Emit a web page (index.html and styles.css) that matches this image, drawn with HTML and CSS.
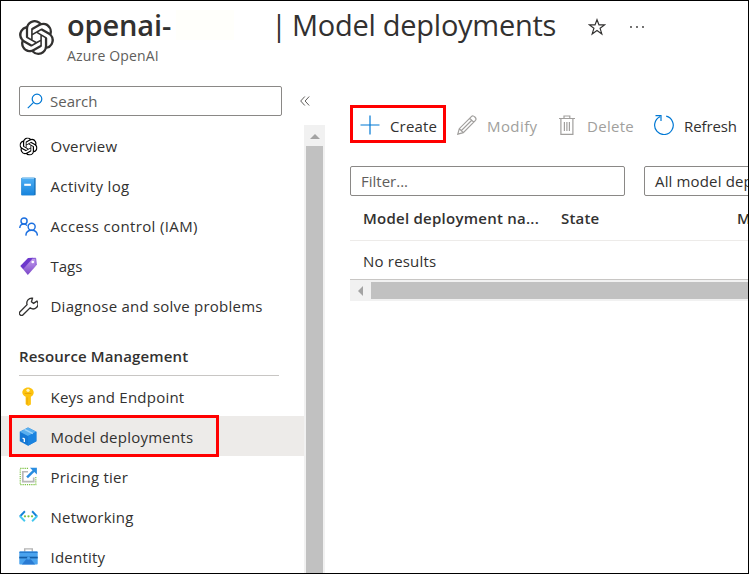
FILE: index.html
```
<!DOCTYPE html>
<html lang="en">
<head>
<meta charset="utf-8">
<title>openai | Model deployments</title>
<link rel="stylesheet" href="styles.css">
</head>
<body>
<svg class="defs" width="0" height="0">
  <symbol id="openai" viewBox="0 0 24 24"><path d="M22.2819 9.8211a5.9847 5.9847 0 0 0-.5157-4.9108 6.0462 6.0462 0 0 0-6.5098-2.9A6.0651 6.0651 0 0 0 4.9807 4.1818a5.9847 5.9847 0 0 0-3.9977 2.9 6.0462 6.0462 0 0 0 .7427 7.0966 5.98 5.98 0 0 0 .511 4.9107 6.051 6.051 0 0 0 6.5146 2.9001A5.9847 5.9847 0 0 0 13.2599 24a6.0557 6.0557 0 0 0 5.7718-4.2058 5.9894 5.9894 0 0 0 3.9977-2.9001 6.0557 6.0557 0 0 0-.7475-7.0729zm-9.022 12.6081a4.4755 4.4755 0 0 1-2.8764-1.0408l.1419-.0804 4.7783-2.7582a.7948.7948 0 0 0 .3927-.6813v-6.7369l2.02 1.1686a.071.071 0 0 1 .038.052v5.5826a4.504 4.504 0 0 1-4.4945 4.4944zm-9.6607-4.1254a4.4708 4.4708 0 0 1-.5346-3.0137l.142.0852 4.783 2.7582a.7712.7712 0 0 0 .7806 0l5.8428-3.3685v2.3324a.0804.0804 0 0 1-.0332.0615L9.74 19.9502a4.4992 4.4992 0 0 1-6.1408-1.6464zM2.3408 7.8956a4.485 4.485 0 0 1 2.3655-1.9728V11.6a.7664.7664 0 0 0 .3879.6765l5.8144 3.3543-2.0201 1.1685a.0757.0757 0 0 1-.071 0l-4.8303-2.7865A4.504 4.504 0 0 1 2.3408 7.872zm16.5963 3.8558L13.1038 8.364 15.1192 7.2a.0757.0757 0 0 1 .071 0l4.8303 2.7913a4.4944 4.4944 0 0 1-.6765 8.1042v-5.6772a.79.79 0 0 0-.407-.667zm2.0107-3.0231l-.142-.0852-4.7735-2.7818a.7759.7759 0 0 0-.7854 0L9.409 9.2297V6.8974a.0662.0662 0 0 1 .0284-.0615l4.8303-2.7866a4.4992 4.4992 0 0 1 6.6802 4.66zM8.3065 12.863l-2.02-1.1638a.0804.0804 0 0 1-.038-.0567V6.0742a4.4992 4.4992 0 0 1 7.3757-3.4537l-.142.0805L8.704 5.459a.7948.7948 0 0 0-.3927.6813zm1.0976-2.3654l2.602-1.4998 2.6069 1.4998v2.9994l-2.5974 1.4997-2.6067-1.4997Z"/></symbol>
  <linearGradient id="blue" x2="0" y2="1"><stop stop-color="#50b0f5"/><stop offset="1" stop-color="#1683dc"/></linearGradient>
  <linearGradient id="violet" x1="0" y1="0" x2="0" y2="1"><stop stop-color="#c4a0ee"/><stop offset="1" stop-color="#7a45c8"/></linearGradient>
</svg>
<div class="app">
  <header class="header">
    <svg class="logo"><use href="#openai"/></svg>
    <div class="heading">
      <h1 class="title"><b class="title-name">openai-</b><i class="title-mask"></i><span class="title-bar">|</span><span class="title-page">Model deployments</span>
        <svg class="star" viewBox="0 0 18 18"><path d="M9 1.700l2 5.200h5.600l-4.500 3.400 1.700 5.600L9 12.500l-4.800 3.400 1.700-5.600L1.400 6.900H7z"/></svg>
        <svg class="more" viewBox="0 0 16 4"><circle cx="2" cy="2" r=".9"/><circle cx="8" cy="2" r=".9"/><circle cx="14" cy="2" r=".9"/></svg>
      </h1>
      <p class="subtitle">Azure OpenAI</p>
    </div>
  </header>
  <div class="body">
    <aside class="side">
      <div class="search-row">
        <div class="field search"><svg class="glass" viewBox="0 0 16 16"><circle cx="10" cy="6" r="4.800"/><path d="M6.600 9.400L.8 15.200"/></svg><span>Search</span></div>
        <svg class="collapse" viewBox="0 0 10 10"><path d="M4.800.5L.7 5l4.100 4.500M9.200.5L5.100 5l4.100 4.500"/></svg>
      </div>
      <div class="menu">
        <nav class="nav">
          <a class="item"><svg class="ico" viewBox="0 0 20 20"><use href="#openai" x="0.500" y="0.500" width="19" height="19"/></svg><span>Overview</span></a>
          <a class="item wide"><svg class="ico" viewBox="0 0 20 20"><rect x="2.500" y=".7" width="15" height="18.600" rx="1" fill="#1670b8"/><rect x="2.500" y=".7" width="13.600" height="18.600" rx="1" fill="url(#blue)"/><path d="M3.500 1.300h12.500" stroke="#9ad0f5" stroke-width="1"/><path d="M5.500 8.200h7" stroke="#fff" stroke-width="2.200"/></svg><span>Activity log</span></a>
          <a class="item wide"><svg class="ico line-blue" viewBox="0 0 20 20"><circle cx="5.300" cy="4.200" r="3.200"/><path d="M.8 11.500C1 8.500 3 7.500 5 7.500c1.600 0 2.700.5 3.500 1.500"/><circle cx="13.300" cy="10.200" r="3.700"/><path d="M7.200 19.600c.2-3.700 2.600-5.600 6.100-5.600s5.900 1.900 6.100 5.600"/></svg><span>Access control (IAM)</span></a>
          <a class="item tight"><svg class="ico" viewBox="0 0 20 20"><path d="M2 10L9.800 1.400 17 1.200l1.200 7.800L9.300 19z" fill="url(#violet)"/><path d="M1.300 9.500L9.500 1l5.500-.2L4.500 12.500z" fill="#6d38cc"/><path d="M14 1.500l3.500-.2.700 7.200" fill="none" stroke="#7b4ad0"/><circle cx="14.500" cy="5.300" r="1.400" fill="#fff"/></svg><span>Tags</span></a>
          <a class="item"><svg class="ico line-dark" viewBox="0 0 20 20"><path d="M18.900 4.300l-3.600 2.400-2.200-1.700 1.100-3.700a5.200 5.200 0 0 0-5.700 6.800L1.100 15.500a2.200 2.200 0 0 0 3.200 3.200l7.400-7.300a5.100 5.100 0 0 0 7.200-7.100z"/></svg><span>Diagnose and solve problems</span></a>
          <h2 class="group">Resource Management</h2>
          <a class="item low"><svg class="ico" viewBox="0 0 20 20"><path d="M9.500.5c3.600 0 6 2.600 6 5.300 0 2-1.100 3.600-3 4.500v8L9.600 20 7 18.200v-7.900C5 9.400 3.500 7.800 3.500 5.800 3.500 3 6 .5 9.500.5z" fill="#fdc30f"/><circle cx="9.500" cy="3.500" r="1.700" fill="#fff3c0"/><path d="M6 6.800h7M8.500 11v7" stroke="#e8a20a" stroke-width="1"/></svg><span>Keys and Endpoint</span></a>
          <a class="item low selected"><svg class="ico" viewBox="0 0 20 20"><path d="M9.500.5L18.300 5v10L9.500 19.700.8 15V5z" fill="#1678d4"/><path d="M9.500.5L18.300 5 9.500 9.500.8 5z" fill="#5aafee"/><path d="M9.500 9.500L18.300 5v10l-8.800 4.700z" fill="#1a83e0"/><path d="M5.800 2.500l8.800 4.500" stroke="#9fd4fa" stroke-width="1.500"/><path d="M3.800 11.800l1.800.8v3.200" fill="none" stroke="#fff" stroke-width="1.400"/></svg><span>Model deployments</span></a>
          <a class="item low"><svg class="ico" viewBox="0 0 20 20"><path d="M9.500 1.500H1.300v17h16.400v-8" fill="none" stroke="#7bc142" stroke-width="1.200" stroke-dasharray="1.300 1"/><path d="M9.500 5H4v10.500h11.500V11" fill="none" stroke="#b8b8b8" stroke-width="1.800"/><path d="M8.500 11L16 3.500" stroke="#2a8de0" stroke-width="2.600"/><path d="M11.500.7h7.300V8z" fill="#2a8de0"/></svg><span>Pricing tier</span></a>
          <a class="item low"><svg class="ico" viewBox="0 0 20 20" fill="none"><path d="M6.200 4.500L1 10" stroke="#1583d8" stroke-width="2"/><path d="M.8 9.500l5.400 5.500" stroke="#43c8ef" stroke-width="2"/><path d="M13.800 4.500L19 10" stroke="#1583d8" stroke-width="2"/><path d="M19.200 9.500L13.800 15" stroke="#43c8ef" stroke-width="2"/><g fill="#7cc242"><circle cx="6.300" cy="9.800" r="1.200"/><circle cx="10" cy="9.800" r="1.200"/><circle cx="13.700" cy="9.800" r="1.200"/></g></svg><span>Networking</span></a>
          <a class="item low"><svg class="ico" viewBox="0 0 20 20"><path d="M6 5V2h8v3" fill="none" stroke="#b4b4b4" stroke-width="1.500"/><rect x=".3" y="4.800" width="19.400" height="13.500" rx=".8" fill="#4aa3ee"/><path d="M.3 10.200h19.400v1.800H.3z" fill="#145da5"/><path d="M3 18.300l4.500-5.500h5l4.500 5.500z" fill="#2a7bd3"/><path d="M.6 5.500h18.800" stroke="#2277cc" stroke-width="1.400"/><circle cx="10" cy="11.500" r="1.600" fill="#4aa3ee"/></svg><span>Identity</span></a>
        </nav>
        <div class="vscroll"><i class="arrow-up"></i><i class="vthumb"></i></div>
      </div>
    </aside>
    <main class="main">
      <div class="toolbar">
        <button class="tool create"><svg class="tico" viewBox="0 0 20 20"><path d="M10 .5v19M.5 10h19"/></svg><span>Create</span></button>
        <button class="tool off modify"><svg class="tico" viewBox="0 0 20 20"><path d="M.8 19.200l1.500-5.500L14.600 1.400c1.800-1.800 5.600 2 3.900 3.900L6.300 17.600zM2.300 13.700l4 3.900M12.800 3.300l3.900 3.900M4.200 15.700L15 5"/></svg><span>Modify</span></button>
        <button class="tool off delete"><svg class="tico" viewBox="0 0 20 20"><path d="M2 3.500h16M7 3.300V1h5.800v2.300M3.900 3.500v15.800h12V3.500M7.400 7v9M9.900 7v9M12.400 7v9"/></svg><span>Delete</span></button>
        <button class="tool refresh"><svg class="tico" viewBox="0 0 20 20"><path d="M12.200 1.200A9.300 9.300 0 1 1 6 1.800M1.500.7H7v5.300"/></svg><span>Refresh</span></button>
      </div>
      <div class="filters">
        <div class="field filter">Filter...</div>
        <div class="field select">All model deployments</div>
      </div>
      <div class="table">
        <div class="row head"><span class="c1">Model deployment na...</span><span class="c2">State</span><span class="c3">M</span></div>
        <div class="row"><span class="c1">No results</span></div>
        <div class="hscroll"><i class="arrow-left"></i><i class="hthumb"></i></div>
      </div>
    </main>
  </div>
</div>
</body>
</html>
```
FILE: styles.css
```
*, ::after { box-sizing: border-box; }
body {
  margin: 0;
  font: 15px/20px "Open Sans", "Noto Sans", sans-serif;
  color: #323130;
  background: #fff;
}
.defs { position: absolute; }
.app {
  width: 749px;
  height: 574px;
  border: 1px solid #000;
  overflow: hidden;
  display: flex;
  flex-direction: column;
}
.header { display: flex; flex: none; height: 85px; padding-left: 18px; }
.logo { width: 35px; height: 35px; margin-top: 19px; fill: #323130; flex: none; }
.heading { margin-left: 13px; }
.title {
  margin: 3px 0 0;
  height: 42px;
  padding-bottom: 1px;
  font-size: 29px;
  line-height: 40px;
  font-weight: 400;
  display: flex;
  align-items: center;
  white-space: nowrap;
}
.title-name { font-weight: 600; width: 109px; letter-spacing: -.15px; }
.title-mask { width: 58px; height: 30px; background: #fffffb; }
.title-bar { margin-left: 37px; width: 21px; }
.title-page { width: 265px; letter-spacing: -.26px; }
.star { width: 18px; height: 18px; margin: 5px 0 0 30.5px; fill: none; stroke: #323130; stroke-width: 1.2; flex: none; }
.more { width: 16px; height: 4px; margin: 5px 0 0 23px; fill: #323130; flex: none; }
.subtitle { margin: 0; font-size: 14px; color: #605e5c; letter-spacing: .17px; }
.body { display: flex; flex: 1; min-height: 0; }
.side { width: 324px; flex: none; display: flex; flex-direction: column; }
.search-row { display: flex; align-items: center; padding-left: 18px; flex: none; height: 30px; }
.field {
  border: 1px solid #8a8886;
  border-radius: 2px;
  height: 30px;
  display: flex;
  align-items: center;
  color: #605e5c;
  white-space: nowrap;
}
.search { width: 263px; padding-left: 7px; }
.glass { width: 16px; height: 16px; margin-right: 7px; fill: none; stroke: #0078d4; stroke-width: 1.2; }
.collapse { width: 10px; height: 10px; margin-left: 18px; fill: none; stroke: #605e5c; }
.menu { display: flex; margin-top: 9px; flex: 1; min-height: 0; overflow: hidden; }
.nav { width: 303px; padding-top: 1px; }
.item { display: flex; align-items: center; height: 40px; flex: none; padding-left: 18px; white-space: nowrap; letter-spacing: .23px; }
.wide { letter-spacing: .36px; }
.tight { letter-spacing: 0; }
.low span { padding-top: 2px; }
.selected { position: relative; background: #edebe9; }
.selected::after {
  content: "";
  position: absolute;
  left: 8px;
  top: -1px;
  width: 210px;
  height: 42px;
  border: 3px solid #f00;
}
.ico { width: 19px; height: 19px; margin-right: 12.5px; }
.line-blue { fill: none; stroke: #1b6fe0; stroke-width: 1.5; }
.line-dark { fill: none; stroke: #323130; stroke-width: 1.4; }
.group { margin: 0 0 0 18px; width: 260px; height: 50px; border-bottom: 1px solid #c8c6c4; padding-top: 20px; font-size: 15px; font-weight: 600; line-height: 20px; letter-spacing: .13px; }
.vscroll { width: 21px; background: #f1f1f1; display: flex; flex-direction: column; align-items: center; }
.arrow-up { margin: 9px 0 7px; border: 5px solid transparent; border-top: 0; border-bottom-color: #a3a3a3; }
.vthumb { width: 17px; flex: 1; background: #c1c1c1; }
.main { flex: 1; min-width: 0; padding: 19px 0 0 25px; overflow: hidden; }
.toolbar { display: flex; height: 38px; }
.tool { border: 0; padding: 2px 0 0; background: none; display: flex; align-items: center; font: inherit; color: inherit; letter-spacing: .15px; }
.tool span { padding-top: 2px; }
.tico { width: 20px; height: 20px; margin-right: 10px; fill: none; stroke: #0078d4; stroke-width: 1.2; }
.create { width: 96px; border: 3px solid #f00; padding-left: 7px; }
.off { color: #a19f9d; }
.off .tico { stroke: #a19f9d; }
.modify { margin-left: 11px; width: 100px; letter-spacing: .42px; }
.delete { width: 97px; letter-spacing: .3px; }
.refresh { letter-spacing: -.1px; }
.filters { display: flex; gap: 19px; margin-top: 23px; }
.filter { width: 275px; padding-left: 10px; flex: none; }
.select { width: 240px; padding-left: 10px; color: #323130; flex: none; letter-spacing: .15px; }
.table { width: 400px; }
.row { display: flex; align-items: center; height: 39px; padding: 2px 0 0 13px; white-space: nowrap; letter-spacing: .2px; border-bottom: 1px solid #c8c6c4; }
.head { height: 45px; padding-top: 0; font-weight: 600; border-color: #edebe9; }
.head .c1 { letter-spacing: .25px; }
.c1 { width: 198px; flex: none; }
.c2 { width: 176px; flex: none; }
.hscroll { display: flex; align-items: center; height: 21px; background: #f1f1f1; }
.arrow-left { margin: 0 8px 0 8px; border: 5px solid transparent; border-left: 0; border-right-color: #a3a3a3; }
.hthumb { height: 17px; flex: 1; background: #c1c1c1; }
```
